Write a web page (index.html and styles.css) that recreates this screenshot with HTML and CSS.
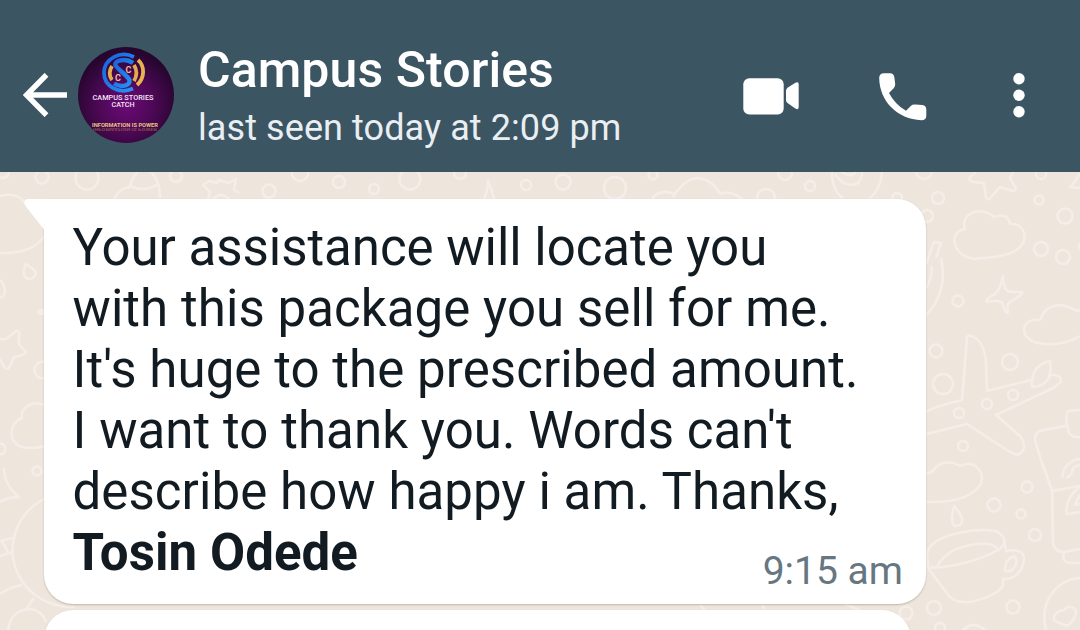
FILE: index.html
```html
<!DOCTYPE html>
<html lang="en">
<head>
  <meta charset="UTF-8">
  <meta name="viewport" content="width=device-width, initial-scale=1.0">
  <title>Campus Stories</title>
  <link rel="stylesheet" href="styles.css">
</head>
<body>
  <header class="topbar">
    <svg class="back" viewBox="0 0 44 44">
      <path d="M23.500 1.800 L3.500 22 L23.500 42.200 M3 22 H44" fill="none" stroke="#fff" stroke-width="5.400"/>
    </svg>
    <svg class="avatar" viewBox="0 0 96 96">
      <defs>
        <radialGradient id="purple" cx="50%" cy="60%" r="55%">
          <stop offset="0" stop-color="#6b0a76"/>
          <stop offset="0.5" stop-color="#4f0858"/>
          <stop offset="1" stop-color="#26062f"/>
        </radialGradient>
        <linearGradient id="blue" x1="0" y1="0" x2="1" y2="1">
          <stop offset="0" stop-color="#1c62dc"/>
          <stop offset="1" stop-color="#2496f4"/>
        </linearGradient>
      </defs>
      <circle cx="48" cy="48" r="48" fill="url(#purple)"/>
      <!-- logo ring -->
      <g fill="none" stroke-width="3.800">
        <path d="M56 10 C42 3 26 12 26 26 C26 39 41 48 55 41.500" stroke="url(#blue)"/>
        <path d="M55 16 C48 11 36 13 37.500 18 C39 22 50 29 51.500 33 C52 39 43 41 36 36.500" stroke="url(#blue)" stroke-width="4.400"/>
        <path d="M34 19 C31 24 31 29 34 33" stroke="#e2ad4a"/>
        <path d="M56 18 C59 23 59 29 56 34" stroke="#e2ad4a"/>
        <path d="M60 13 C67 19 67 31 59 38" stroke="#e9b44f"/>
      </g>
      <g font-family="Roboto, sans-serif" font-weight="700" text-anchor="middle">
        <text x="40" y="34" font-size="9" fill="#f0b9a0">C</text>
        <text x="50.500" y="26" font-size="9" fill="#f0b9a0">C</text>
        <g font-weight="500" fill="#f4e6f6">
          <text x="45" y="53.300" font-size="6.800" textLength="61" lengthAdjust="spacingAndGlyphs">CAMPUS STORIES</text>
          <text x="45" y="60.300" font-size="6.800" textLength="23" lengthAdjust="spacingAndGlyphs">CATCH</text>
        </g>
        <text x="47" y="79.800" font-size="4.800" fill="#e8c77c" textLength="66" lengthAdjust="spacingAndGlyphs">INFORMATION IS POWER</text>
        <text x="47" y="-80.500" font-size="4" fill="#b58a52" opacity="0.5" transform="scale(1 -1)" textLength="64" lengthAdjust="spacingAndGlyphs">INFORMATION IS POWER</text>
      </g>
    </svg>
    <div class="contact">
      <h1 class="name">Campus Stories</h1>
      <p class="status">last seen today at 2:09 pm</p>
    </div>
    <nav class="actions">
      <svg class="video" viewBox="0 0 56 38" fill="#fff">
        <rect x="0.300" y="1.200" width="40.400" height="36.300" rx="6"/>
        <path d="M43 14 Q43 12 44.500 10.800 L52 6 Q55.700 4.100 55.700 7.500 V29.800 Q55.700 33.800 52 31.300 L44.500 26 Q43 24.800 43 23.300 Z"/>
      </svg>
      <svg class="phone" viewBox="0 0 48 48" fill="#fff">
        <path d="M5 0.200 H11 Q14.700 0.200 15.300 4 L16.200 11 Q16.500 13.500 14.700 15.200 L10 20 Q16 31.500 27 37.800 L32 32.800 Q33.500 31.200 36 31.400 L43.500 32 Q47.300 32.500 47.300 36.500 V42.500 Q47.300 47.200 42.500 47.200 C18 46.200 0.500 28 0.200 5 Q0.200 0.200 5 0.200 Z"/>
      </svg>
      <svg class="menu" viewBox="0 0 12 46" fill="#fff">
        <circle cx="6" cy="5.700" r="5.700"/>
        <circle cx="6" cy="22.200" r="5.700"/>
        <circle cx="6" cy="38.700" r="5.700"/>
      </svg>
    </nav>
  </header>

  <main class="chat">
    <!-- wallpaper doodles -->
    <svg class="wallpaper" viewBox="0 172 1080 458">
      <!-- small circles -->
      <circle cx="3" cy="172" r="6"/>
      <circle cx="42" cy="177" r="6.500"/>
      <circle cx="87" cy="178" r="11.500"/>
      <circle cx="176" cy="176" r="6"/>
      <circle cx="269" cy="191" r="6.500"/>
      <circle cx="300" cy="173" r="8"/>
      <circle cx="339" cy="182" r="6"/>
      <circle cx="374" cy="189" r="5"/>
      <circle cx="410" cy="179" r="10.500"/>
      <circle cx="460" cy="173" r="6"/>
      <circle cx="526" cy="185" r="5"/>
      <circle cx="563" cy="182" r="7.500"/>
      <circle cx="615" cy="188" r="11"/>
      <circle cx="653" cy="175" r="4.500"/>
      <circle cx="766" cy="198" r="9"/>
      <circle cx="785" cy="173" r="7"/>
      <circle cx="810" cy="186" r="5"/>
      <circle cx="897" cy="198" r="5"/>
      <circle cx="924" cy="171" r="8"/>
      <circle cx="938" cy="198" r="6"/>
      <circle cx="927" cy="216" r="6"/>
      <circle cx="1041" cy="174" r="5"/>
      <circle cx="1039" cy="200" r="4.500"/>
      <circle cx="1065" cy="216" r="7.500"/>
      <circle cx="1041" cy="249" r="7"/>
      <circle cx="1063" cy="257" r="7"/>
      <circle cx="1082" cy="246" r="3"/>
      <circle cx="958" cy="301" r="5.500"/>
      <circle cx="936" cy="351" r="6.500"/>
      <circle cx="943" cy="384" r="10"/>
      <circle cx="1010" cy="362" r="8"/>
      <circle cx="1013" cy="395" r="5"/>
      <circle cx="987" cy="404" r="5"/>
      <circle cx="959" cy="413" r="5"/>
      <circle cx="963" cy="446" r="5"/>
      <circle cx="1027" cy="487" r="5.500"/>
      <circle cx="994" cy="505" r="6.500"/>
      <circle cx="1021" cy="514" r="4.500"/>
      <circle cx="1035" cy="535" r="6"/>
      <circle cx="1013" cy="607" r="6.500"/>
      <circle cx="906" cy="613" r="6.500"/>
      <circle cx="934" cy="608" r="7"/>
      <circle cx="940" cy="628" r="5"/>
      <circle cx="43" cy="370" r="8.500"/>
      <circle cx="0" cy="449" r="5.500"/>
      <circle cx="37" cy="471" r="4.500"/>
      <circle cx="41" cy="312" r="2"/>
      <!-- left edge -->
      <path d="M0 196 C10 193 21 195 26 205 M44 236 C36 250 16 254 0 253 M26 264 C21 274 25 279 30 279 C37 277 37 272 33 269 Z"/>
      <path d="M0 280 C7 287 6 297 0 298"/>
      <path d="M0 339 L6 339 L16 331 Q20 330 19 337 L19 344 L26 352 Q25 355 14 357 L9 368 Q6 371 2 363 L0 359"/>
      <path d="M44 405 C32 400 20 408 22 418 C8 423 8 443 22 447 C31 449 38 448 44 446"/>
      <path d="M4 468 Q4 485 19 497 Q8 497 0 502"/>
      <path d="M44 499 C14 515 6 548 18 574 C28 595 50 608 75 607 M0 541 L13 538 M2 541 L9 554 M0 556 L13 552 M0 594 Q10 587 22 585 M34 598 L27 608 M8 630 C10 610 30 604 40 613 Q44 616 46 622"/>
      <!-- top strip -->
      <path d="M114 199 Q119 188 130 187 C131 178 136 175 137 172 M151 172 Q160 180 160 198 M130 186 Q145 193 158 184"/>
      <path d="M208 199 L210 192 L203 185 L209 181 L217 183 L219 180 L229 183 L236 179 L234 190 L239 193 M213 199 Q220 191 229 199"/>
      <path d="M484 199 Q488 190 488 181 Q492 190 494 199 M652 199 Q659 188 674 194 M673 197 Q684 179 698 178 Q713 180 720 194 M720 194 Q732 190 742 199"/>
      <path d="M832 172 Q832 191 843 198 M882 172 Q881 189 870 198 M835 174 Q845 189 858 183 Q862 178 862 172 M841 172 Q850 178 856 172"/>
      <!-- star, cloud and sparkle -->
      <path d="M976 172 L970 177 Q968 180 973 182 L984 183 L986 197 Q988 202 991 197 L1000 187 L1013 191 Q1017 190 1015 187 L1010 178 L1013 172 M1080 173 Q1076 181 1070 187 L1080 188"/>
      <path d="M965 229 C960 215 979 204 994 217 Q1008 212 1010 224 C1024 223 1028 237 1021 246 C1012 257 990 257 975 259 C953 257 947 232 965 229 Z"/>
      <path d="M1003 276 Q1003 291 1011 292 L1022 292 Q1024 294 1010 302 Q1006 305 1008 312 Q1006 316 1002 302 Q998 300 987 302 Q984 300 995 294 Q1001 288 1003 276 Z"/>
      <path d="M926 264 L934 242 L941 243 L936 258 M941 258 C946 279 941 301 926 315 M932 266 Q932 279 926 288"/>
      <path d="M1041 320 C1041 310 1056 299 1075 310 L1080 311 M1041 320 C1022 317 1019 334 1032 341 C1047 347 1066 344 1080 336"/>
      <!-- plane -->
      <path d="M926 412 Q933 407 962 400 L967 337 Q969 333 978 340 Q986 349 986 365 L987 391 L1031 380 M1048 375 Q1064 374 1060 383 L1053 388 L996 415 L1020 436 Q1029 448 1018 455 L1010 452 L967 424 L926 434"/>
      <path d="M1032 387 Q1031 365 1050 361 Q1051 365 1050 376 Q1046 386 1032 387 Z"/>
      <path d="M926 474 L933 471 C940 460 953 461 960 466 C975 459 985 472 981 484 C969 501 948 502 926 502"/>
      <!-- drop and cup -->
      <path d="M954 506 C951 518 951 526 957 526 C966 524 962 515 954 506 Z"/>
      <path d="M927 553 C932 533 984 526 998 532 Q1011 542 998 550 C977 562 944 569 928 567 Z M937 567 Q946 547 979 544 Q994 543 997 549 M928 568 L949 596 Q955 603 970 602 Q995 597 1003 586 L1003 579 C1015 580 1024 570 1024 558 Q1023 548 1006 551 L1004 538"/>
      <path d="M1005 571 Q1004 560 1014 556 Q1019 560 1014 568 Q1009 573 1005 571 Z M963 630 Q974 620 985 630"/>
      <!-- blender and heart -->
      <path d="M1044 470 L1035 440 Q1035 431 1043 430 L1066 426 M1080 410 L1068 411 Q1064 416 1069 433 L1074 437 L1080 437 M1072 470 Q1074 466 1080 465"/>
      <path d="M1042 462 L1052 491 L1080 486 M1052 491 L1053 544 Q1056 552 1064 552 L1080 549 M1064 552 Q1061 562 1070 563 L1080 563 M1063 478 Q1061 468 1074 460 L1080 459 M1066 478 Q1072 476 1073 468 M1080 486 Q1064 500 1067 514 L1080 512 M1080 494 L1075 505 L1080 504"/>
      <path d="M1046 630 C1038 600 1060 578 1080 578 M1064 610 C1054 611 1051 620 1057 622 L1067 626 Q1079 616 1075 609 Q1069 604 1064 610 Z"/>
      <path d="M762 604 L765 610 M700 605 L705 610 M845 604 L860 610"/>
    </svg>

    <div class="bubble">
      <svg class="tail" viewBox="0 0 22 32">
        <path d="M22 0 H3.500 Q-1.500 1 1.500 7 L20 30.500 H22 Z" fill="#fff"/>
      </svg>
      <p class="text">
        <span class="tight">Your assistance will locate you</span><br>
        with this package you sell for me.<br>
        It's huge to the prescribed amount.<br>
        I want to thank you. Words can't<br>
        describe how happy i am. Thanks,<br>
        <b>Tosin Odede</b>
      </p>
      <time class="time">9:15 am</time>
    </div>
    <div class="bubble next"></div>
  </main>
</body>
</html>
```
FILE: styles.css
```css
* {
  box-sizing: border-box;
}
body {
  margin: 0;
  height: 630px;
  overflow: hidden;
  font-family: Roboto, sans-serif;
  background-color: #eee6dd;
}
h1, p {
  margin: 0;
}
svg {
  display: block;
  flex: none;
}

.topbar {
  display: flex;
  height: 172px;
  padding: 40px 55px 0 23px;
  background-color: #3b5563;
  color: #fff;
}
.back {
  width: 44px;
  height: 44px;
  margin-top: 33px;
}
.avatar {
  width: 96px;
  height: 96px;
  margin: 7px 24px 0 11px;
}
.contact {
  white-space: nowrap;
}
.name {
  font-size: 50px;
  font-weight: 500;
  line-height: 60px;
  letter-spacing: 0.07px;
}
.status {
  margin-top: 6px;
  font-size: 36px;
  line-height: 44px;
  letter-spacing: 0.09px;
  color: #e9eef2;
}
.actions {
  display: flex;
  align-items: center;
  height: 48px;
  margin: 32px 0 0 auto;
}
.video {
  width: 56px;
  height: 38px;
}
.phone {
  width: 48px;
  height: 48px;
  margin: 1px 86px 0 80px;
}
.menu {
  width: 12px;
  height: 46px;
}

.chat {
  position: relative;
  height: 458px;
  padding: 26.5px 0 0 44px;
  overflow: hidden;
}
.wallpaper {
  position: absolute;
  left: 0;
  top: 0;
  width: 1080px;
  height: 458px;
  fill: none;
  stroke: #f5eee8;
  stroke-width: 2.5;
  stroke-linejoin: round;
}
.bubble {
  position: relative;
  width: 882px;
  height: 405px;
  padding: 18.5px 24px 0 28.5px;
  border-radius: 0 29px 29px 29px;
  background-color: #fff;
  box-shadow: 0 1px 2px rgba(90, 70, 50, 0.3);
}
.tail {
  position: absolute;
  left: -20px;
  top: 0;
  width: 22px;
  height: 32px;
}
.text {
  font-size: 51px;
  line-height: 61px;
  letter-spacing: 0.07px;
  color: #111b21;
  white-space: nowrap;
}
.tight {
  letter-spacing: -0.03px;
}
.time {
  position: absolute;
  right: 23px;
  bottom: 9.5px;
  font-size: 39px;
  line-height: 46px;
  color: #667781;
}
.next {
  width: 867px;
  margin-top: 6.5px;
  border-radius: 29px;
}
```
